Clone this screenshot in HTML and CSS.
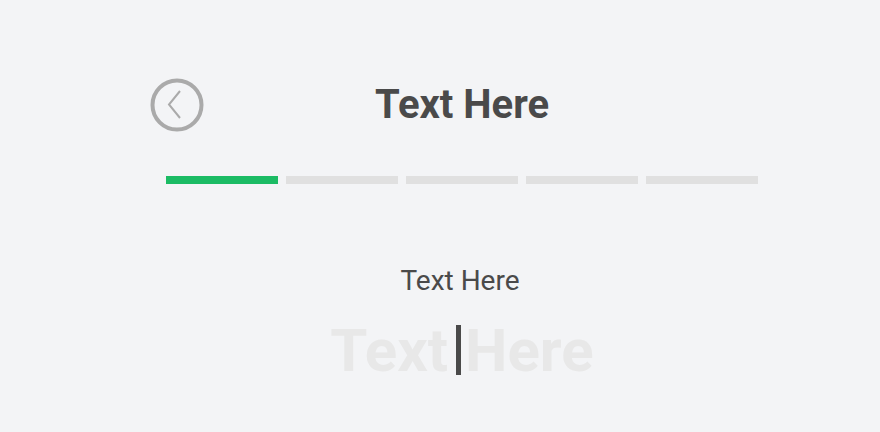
FILE: index.html
```html
<!DOCTYPE html>
<html>
<head>
<meta charset="utf-8">
<link rel="stylesheet" href="styles.css">
</head>
<body>
<div class="page">
  <div class="column">
    <div class="header">
      <button class="back" aria-label="Back">
        <svg width="54" height="54" viewBox="0 0 54 54">
          <circle cx="27" cy="27" r="24.5" fill="none" stroke="#aaaaaa" stroke-width="4"/>
          <path d="M30 13 L19 26.5 L30 40" fill="none" stroke="#aaaaaa" stroke-width="2"/>
        </svg>
      </button>
      <h1 class="title">Text Here</h1>
    </div>
    <div class="progress">
      <span class="seg seg-active"></span>
      <span class="seg"></span>
      <span class="seg"></span>
      <span class="seg"></span>
      <span class="seg"></span>
    </div>
    <div class="label">Text Here</div>
    <div class="input"><span class="ph">Text</span><span class="caret"></span><span class="ph">Here</span></div>
  </div>
</div>
</body>
</html>
```
FILE: styles.css
```css
html, body {
  margin: 0;
  padding: 0;
  background: #f3f4f6;
  font-family: Roboto, "Liberation Sans", sans-serif;
}
.page {
  width: 880px;
  height: 432px;
  overflow: hidden;
}
.column {
  width: 592px;
  margin-left: 166px;
  padding-top: 78px;
  display: flex;
  flex-direction: column;
}
.header {
  position: relative;
  height: 54px;
  display: flex;
  align-items: center;
  justify-content: center;
}
.back {
  position: absolute;
  left: -16px;
  top: 0;
  width: 54px;
  height: 54px;
  padding: 0;
  border: 0;
  background: none;
  display: block;
}
.back svg { display: block; }
.title {
  margin: 0;
  font-size: 40px;
  font-weight: 700;
  color: #4a4a4a;
  line-height: 54px;
}
.progress {
  margin-top: 44px;
  display: flex;
  gap: 8px;
}
.seg {
  flex: 1;
  height: 8px;
  background: #e0e0e0;
}
.seg-active { background: #1bbb64; }
.label {
  margin-top: 82px;
  padding-right: 4px;
  text-align: center;
  font-size: 28px;
  color: #4a4a4a;
  line-height: 30px;
}
.input {
  margin-top: 25px;
  display: flex;
  justify-content: center;
  align-items: center;
  height: 60px;
}
.ph {
  font-size: 60px;
  font-weight: 700;
  color: #e8e8e8;
  line-height: 60px;
}
.caret {
  width: 5px;
  height: 50px;
  background: #4a4a4a;
  margin: 0 4px 0 8px;
  position: relative;
  top: -1px;
}
```
